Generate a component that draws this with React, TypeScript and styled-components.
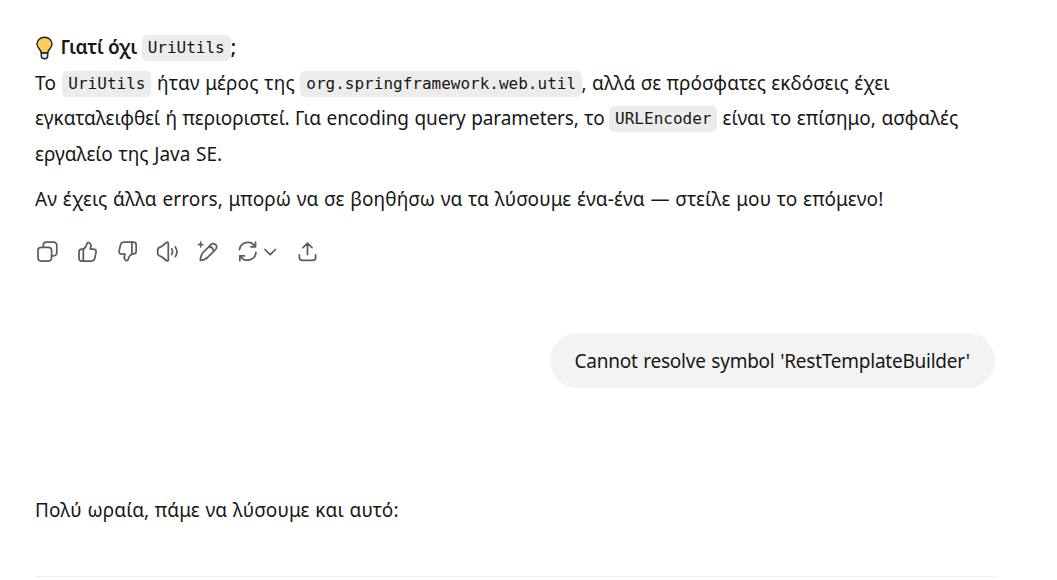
import React from 'react';
import styled, { createGlobalStyle } from 'styled-components';

const GlobalStyle = createGlobalStyle`
  body { margin: 0; background: #fff; }
  * { box-sizing: border-box; }
`;

const Thread = styled.main`
  width: 960px;
  height: 580px;
  margin-left: 35px;
  padding-top: 30.2px;
  overflow: hidden;
  color: #171717;
  font: 19px/35.6px "Noto Sans", "Open Sans", sans-serif;
`;

const Paragraph = styled.div`
  & + & { margin-top: 9.6px; }
`;

const Line = styled.div`
  display: flex;
  align-items: center;
  height: 35.6px;
  white-space: pre;
`;

const Text = styled.span<{ $track?: number; $word?: number; $bold?: boolean; $left?: number; $right?: number }>`
  letter-spacing: ${p => p.$track ?? 0}px;
  word-spacing: ${p => p.$word ?? 0}px;
  font-weight: ${p => (p.$bold ? 600 : 400)};
  margin-left: ${p => p.$left ?? 0}px;
  margin-right: ${p => p.$right ?? 0}px;
`;

const Code = styled.code`
  height: 26px;
  padding: 0 6px;
  border-radius: 5px;
  background: #ececec;
  font: 16px/26px "DejaVu Sans Mono", monospace;
`;

const Bulb = styled.svg`
  width: 19px;
  height: 24px;
  margin-right: 6.5px;
`;

const Actions = styled.div`
  display: flex;
  gap: 16px;
  margin-top: 21.8px;
  height: 24px;
`;

const Action = styled.button`
  display: flex;
  height: 24px;
  padding: 0;
  border: 0;
  background: none;
  color: #5d5d5d;
`;

const Glyph = styled.svg`
  height: 24px;
  fill: none;
  stroke: currentColor;
  stroke-width: 1.75;
  stroke-linecap: round;
  stroke-linejoin: round;
`;

const UserTurn = styled.div`
  display: flex;
  justify-content: flex-end;
  margin-top: 69px;
`;

const Bubble = styled.div`
  width: 445px;
  height: 55px;
  padding: 1px 0 0 24.5px;
  border-radius: 28px;
  background: #f3f3f3;
  line-height: 55px;
  white-space: nowrap;
`;

const Reply = styled.div`
  height: 188px;
  padding-top: 105px;
`;

const Divider = styled.hr`
  height: 1px;
  margin: 0;
  border: 0;
  background: #f0f0f0;
`;

const thumb = (
  <>
    <path d="M8.3 9.2c2-1.1 3.1-3 3.7-5.4.3-1.2 1-1.6 2.1-1.1 1.7.8 2.1 2.4 1.7 4L15.2 9h3.1c2 0 3.1 1.3 2.7 3.3l-1.2 5.800c-.4 2-1.700 3.100-3.800 3.100H6.800C4.900 21.200 4 20.200 4 18.300v-6.200c0-1.900.9-2.900 2.800-2.900z" />
    <path d="M8.3 9.4v11.600" />
  </>
);

export default function App() {
  return (
    <>
      <GlobalStyle />
      <Thread>
        <Paragraph>
          <Line>
            <Bulb viewBox="0 0 19 24">
              <path d="M6.3 17c0-2-1.3-3.2-2.5-4.7C2.6 10.9 2 9.7 2 8.3 2 4.4 5.2 1.2 9.5 1.2S17 4.4 17 8.3c0 1.4-.6 2.6-1.8 4-1.2 1.500-2.500 2.700-2.500 4.700z" fill="#fdcc59" stroke="#202020" strokeWidth="1.4" />
              <path d="M6.3 17h6.400v3.300c0 1.500-1.300 2.400-3.200 2.400s-3.200-.9-3.200-2.400z" fill="#e4e6e8" stroke="#202020" strokeWidth="1.4" />
            </Bulb>
            <Text $bold $track={-0.35} $right={4.5}>Γιατί όχι</Text>
            <Code>UriUtils</Code>
            <Text $bold>;</Text>
          </Line>
          <Line>
            <Text $track={0.3} $right={6}>Το</Text>
            <Code>UriUtils</Code>
            <Text $track={0.15} $word={0.5} $left={5.7} $right={5.5}>ήταν μέρος της</Text>
            <Code>org.springframework.web.util</Code>
            <Text $track={0.05} $word={0.4} $left={-0.5}>, αλλά σε πρόσφατες εκδόσεις έχει</Text>
          </Line>
          <Line>
            <Text $track={-0.08} $word={0.6} $right={4.5}>εγκαταλειφθεί ή περιοριστεί. Για encoding query parameters, το</Text>
            <Code>URLEncoder</Code>
            <Text $track={0.05} $word={0.5} $left={5}>είναι το επίσημο, ασφαλές</Text>
          </Line>
          <Line>
            <Text $track={0.03} $word={0.6}>εργαλείο της Java SE.</Text>
          </Line>
        </Paragraph>
        <Paragraph>
          <Line>
            <Text $track={0.13} $word={0.55}>Αν έχεις άλλα errors, μπορώ να σε βοηθήσω να τα λύσουμε ένα-ένα — στείλε μου το επόμενο!</Text>
          </Line>
        </Paragraph>

        <Actions>
          <Action aria-label="Copy">
            <Glyph width="24" viewBox="0 0 24 24">
              <rect x="3" y="7.4" width="13.6" height="13.6" rx="3.2" />
              <path d="M8.3 7.200V5.200a3.100 3.100 0 0 1 3.100-3.100h7.300a3.100 3.100 0 0 1 3.100 3.100v7.600a3.100 3.100 0 0 1-3.100 3.100h-1.900" />
            </Glyph>
          </Action>
          <Action aria-label="Good response">
            <Glyph width="24" viewBox="0 0 24 24">{thumb}</Glyph>
          </Action>
          <Action aria-label="Bad response">
            <Glyph width="24" viewBox="0 0 24 24"><g transform="rotate(180 12.6 11.600)">{thumb}</g></Glyph>
          </Action>
          <Action aria-label="Read aloud">
            <Glyph width="24" viewBox="0 0 24 24">
              <path d="M11.600 2.500 6.900 6.200c-.4.300-.8.500-1.300.600-1.900.3-2.900 1.700-2.900 3.700v2.200c0 2 1 3.400 2.900 3.700.5.100.9.300 1.300.6l4.700 3.700c.8.600 1.700.2 1.700-.8V3.300c0-1-.9-1.400-1.700-.8z" />
              <path d="M16.7 8.800c1.100 1.900 1.100 3.900 0 5.800M20.300 6.900c2.100 3.100 2.100 6.500 0 9.600" />
            </Glyph>
          </Action>
          <Action aria-label="Edit">
            <Glyph width="24" viewBox="0 0 24 24">
              <path d="M5.300 20.500c.2-3.500.8-5.900 2.800-8l7.600-7.700c1.400-1.400 3.400-1.400 4.900-.1s1.400 3.400 0 4.800l-7.700 7.600c-2 2.100-4.100 3.100-7.600 3.400z" />
              <path d="M14 6.700c2.700.3 4.300 1.900 4.600 4.600" />
              <path d="M5.800 1.700c.2 2 .9 2.700 2.900 2.900-2 .3-2.700 1-2.900 3-.3-2-1-2.700-3-3 2-.2 2.700-.9 3-2.900z" fill="currentColor" strokeWidth=".9" />
            </Glyph>
          </Action>
          <Action aria-label="Try again">
            <Glyph width="44" viewBox="0 0 44 24">
              <path d="M4.500 9.600A8.400 8.400 0 0 1 19.900 6.200M20.500 2.200v4.600h-4.600M20.900 12.400A8.400 8.400 0 0 1 5.400 16.200M4.800 20.500v-4.600h4.700" />
              <path d="m30 9.500 5.200 5.200 5.200-5.200" />
            </Glyph>
          </Action>
          <Action aria-label="Share">
            <Glyph width="24" viewBox="0 0 24 24">
              <path d="M12.500 14.500V3.200M8 7.600l4.500-4.500L17 7.600M4.400 14.800v2.600a2.900 2.900 0 0 0 2.900 2.900h10.400a2.900 2.900 0 0 0 2.900-2.900v-2.600" />
            </Glyph>
          </Action>
        </Actions>

        <UserTurn>
          <Bubble><Text $track={-0.24} $word={1}>Cannot resolve symbol 'RestTemplateBuilder'</Text></Bubble>
        </UserTurn>

        <Reply>
          <Line><Text $track={0.15} $word={0.5}>Πολύ ωραία, πάμε να λύσουμε και αυτό:</Text></Line>
        </Reply>
        <Divider />
      </Thread>
    </>
  );
}
